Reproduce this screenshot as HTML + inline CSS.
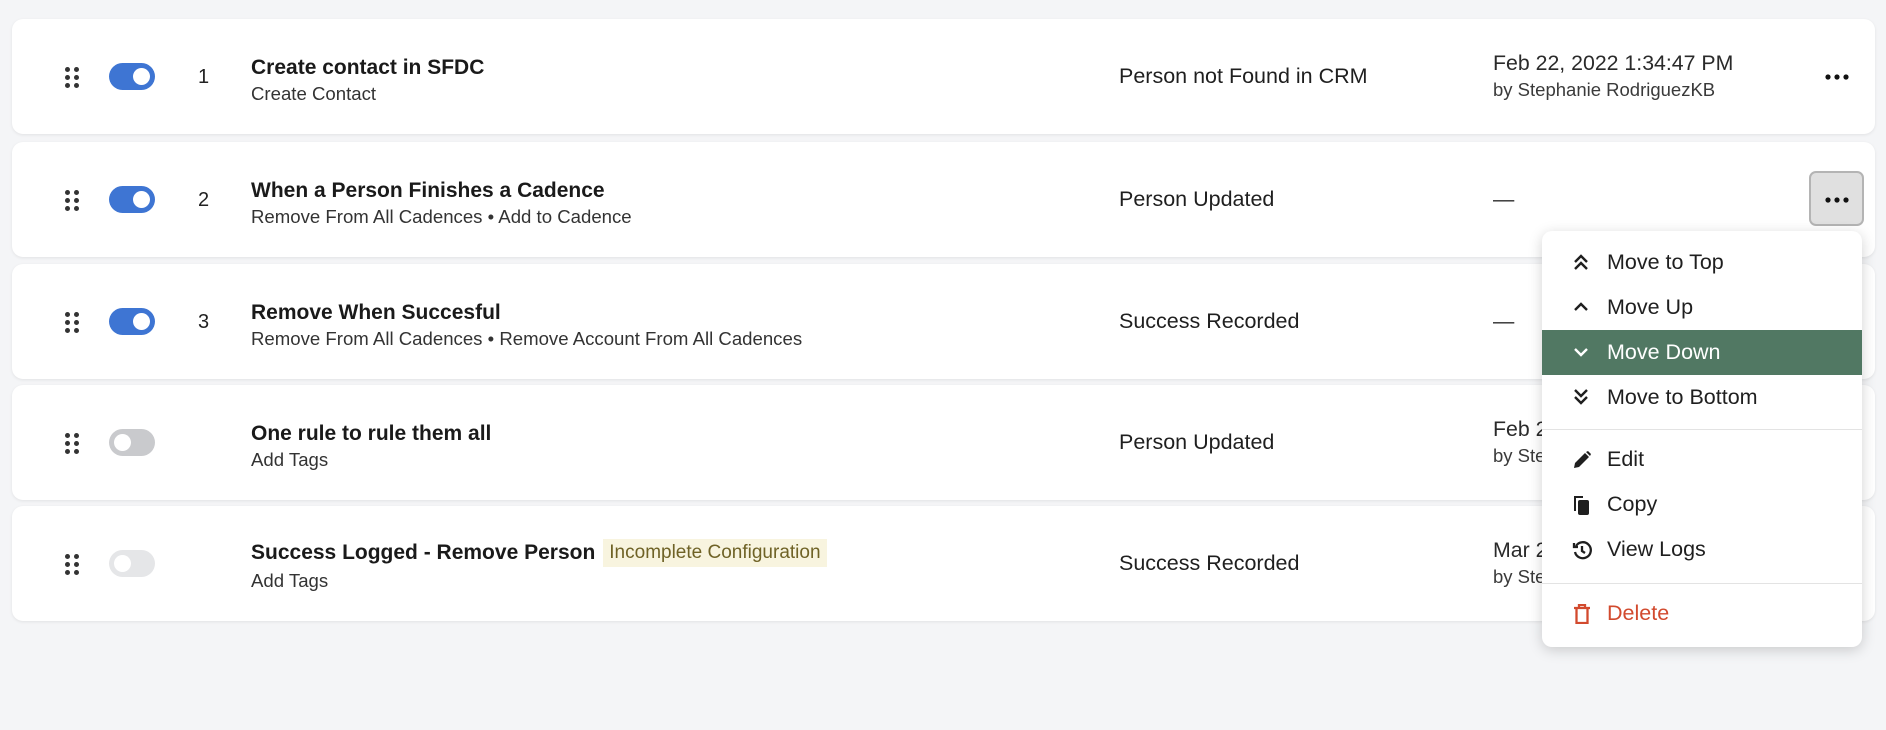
<!DOCTYPE html>
<html><head><meta charset="utf-8"><style>
*{margin:0;padding:0;box-sizing:border-box}
body{width:1886px;height:730px;background:#f4f5f7;font-family:"Liberation Sans",sans-serif;color:#1d1d1f;position:relative;overflow:hidden}
.card{position:absolute;left:12px;width:1863px;height:115px;background:#fff;border-radius:11px;box-shadow:0 1px 3px rgba(0,0,0,.08)}
.dots{position:absolute;left:53px;width:14px;height:20px}
.dots i{position:absolute;width:5px;height:5px;border-radius:50%;background:#333}
.tog{position:absolute;left:97px;width:46px;height:27px;border-radius:14px;background:#3e75d3}
.tog::after{content:"";position:absolute;top:5px;left:24px;width:17px;height:17px;border-radius:50%;background:#fff}
.tog.off{background:#c9cacd}.tog.off::after{left:5px}
.tog.dis{background:#e5e6e8}
.num{position:absolute;left:186px;font-size:20px;color:#222}
.title{position:absolute;left:239px;font-size:21px;font-weight:bold;color:#1a1a1a;white-space:nowrap}
.sub{position:absolute;left:239px;font-size:18.6px;color:#333;white-space:nowrap}
.st{position:absolute;left:1107px;font-size:21.5px;color:#1f1f1f}
.dt{position:absolute;left:1481px;font-size:21.3px;color:#2a2a2a;white-space:nowrap}
.by{position:absolute;left:1481px;font-size:18.5px;color:#3a3a3a;white-space:nowrap}
.ell{position:absolute;left:1813px;width:24px;height:6px}
.badge{display:inline-block;margin-left:8px;background:#f8f4df;color:#6f6226;font-weight:normal;font-size:19px;padding:3px 6px;vertical-align:1px}
.menu{position:absolute;left:1542px;top:231px;width:320px;height:416px;background:#fff;border-radius:10px;box-shadow:0 3px 14px rgba(0,0,0,.18)}
.it{position:absolute;left:0;width:320px;height:45px;font-size:21.5px;color:#1f1f1f}
.it span{position:absolute;left:65px;top:10px}
.it svg{position:absolute;left:30px;top:13px}
.hl{background:#517863;color:#fff}
.div{position:absolute;left:0;width:320px;height:1px;background:#e3e3e3}
</style></head><body>

<div class="card" style="top:19px">
 <div class="dots" style="top:48px"><i style="left:0;top:0"></i><i style="left:9px;top:0"></i><i style="left:0;top:8px"></i><i style="left:9px;top:8px"></i><i style="left:0;top:16px"></i><i style="left:9px;top:16px"></i></div>
 <div class="tog" style="top:44px"></div>
 <div class="num" style="top:47px">1</div>
 <div class="title" style="top:37px">Create contact in SFDC</div>
 <div class="sub" style="top:64px">Create Contact</div>
 <div class="st" style="top:45px">Person not Found in CRM</div>
 <div class="dt" style="top:32px">Feb 22, 2022 1:34:47 PM</div>
 <div class="by" style="top:60px">by Stephanie RodriguezKB</div>
 <svg class="ell" style="top:55px" viewBox="0 0 24 6"><circle cx="3" cy="3" r="2.6" fill="#111"/><circle cx="12" cy="3" r="2.6" fill="#111"/><circle cx="21" cy="3" r="2.6" fill="#111"/></svg>
</div>

<div class="card" style="top:142px">
 <div class="dots" style="top:48px"><i style="left:0;top:0"></i><i style="left:9px;top:0"></i><i style="left:0;top:8px"></i><i style="left:9px;top:8px"></i><i style="left:0;top:16px"></i><i style="left:9px;top:16px"></i></div>
 <div class="tog" style="top:44px"></div>
 <div class="num" style="top:47px">2</div>
 <div class="title" style="top:37px">When a Person Finishes a Cadence</div>
 <div class="sub" style="top:64px">Remove From All Cadences • Add to Cadence</div>
 <div class="st" style="top:45px">Person Updated</div>
 <div class="dt" style="top:45px">—</div>
 <div style="position:absolute;left:1797px;top:29px;width:55px;height:55px;background:#e0e0e0;border:2px solid #b4b4b4;border-radius:7px"></div>
 <svg class="ell" style="top:55px" viewBox="0 0 24 6"><circle cx="3" cy="3" r="2.6" fill="#111"/><circle cx="12" cy="3" r="2.6" fill="#111"/><circle cx="21" cy="3" r="2.6" fill="#111"/></svg>
</div>

<div class="card" style="top:264px">
 <div class="dots" style="top:48px"><i style="left:0;top:0"></i><i style="left:9px;top:0"></i><i style="left:0;top:8px"></i><i style="left:9px;top:8px"></i><i style="left:0;top:16px"></i><i style="left:9px;top:16px"></i></div>
 <div class="tog" style="top:44px"></div>
 <div class="num" style="top:47px">3</div>
 <div class="title" style="top:37px">Remove When Succesful</div>
 <div class="sub" style="top:64px">Remove From All Cadences • Remove Account From All Cadences</div>
 <div class="st" style="top:45px">Success Recorded</div>
 <div class="dt" style="top:45px">—</div>
</div>

<div class="card" style="top:385px">
 <div class="dots" style="top:48px"><i style="left:0;top:0"></i><i style="left:9px;top:0"></i><i style="left:0;top:8px"></i><i style="left:9px;top:8px"></i><i style="left:0;top:16px"></i><i style="left:9px;top:16px"></i></div>
 <div class="tog off" style="top:44px"></div>
 <div class="title" style="top:37px">One rule to rule them all</div>
 <div class="sub" style="top:64px">Add Tags</div>
 <div class="st" style="top:45px">Person Updated</div>
 <div class="dt" style="top:32px">Feb 22, 2022 1:34:47 PM</div>
 <div class="by" style="top:60px">by Stephanie RodriguezKB</div>
</div>

<div class="card" style="top:506px">
 <div class="dots" style="top:48px"><i style="left:0;top:0"></i><i style="left:9px;top:0"></i><i style="left:0;top:8px"></i><i style="left:9px;top:8px"></i><i style="left:0;top:16px"></i><i style="left:9px;top:16px"></i></div>
 <div class="tog off dis" style="top:44px"></div>
 <div class="title" style="top:33px">Success Logged - Remove Person<span class="badge">Incomplete Configuration</span></div>
 <div class="sub" style="top:64px">Add Tags</div>
 <div class="st" style="top:45px">Success Recorded</div>
 <div class="dt" style="top:32px">Mar 22, 2022 1:34:47 PM</div>
 <div class="by" style="top:60px">by Stephanie RodriguezKB</div>
</div>

<div class="menu">
 <div class="it" style="top:9px"><svg width="18" height="18" viewBox="0 0 18 18" fill="none" stroke="#1f1f1f" stroke-width="2.4"><path d="M3 9l6-6 6 6M3 16l6-6 6 6"/></svg><span>Move to Top</span></div>
 <div class="it" style="top:54px"><svg width="18" height="18" viewBox="0 0 18 18" fill="none" stroke="#1f1f1f" stroke-width="2.4"><path d="M3 12l6-6 6 6"/></svg><span>Move Up</span></div>
 <div class="it hl" style="top:99px"><svg width="18" height="18" viewBox="0 0 18 18" fill="none" stroke="#fff" stroke-width="2.4"><path d="M3 6l6 6 6-6"/></svg><span>Move Down</span></div>
 <div class="it" style="top:144px"><svg width="18" height="18" viewBox="0 0 18 18" fill="none" stroke="#1f1f1f" stroke-width="2.4"><path d="M3 2l6 6 6-6M3 9l6 6 6-6"/></svg><span>Move to Bottom</span></div>
 <div class="div" style="top:198px"></div>
 <div class="it" style="top:206px"><svg width="20" height="20" viewBox="0 0 20 20"><path d="M2 18l1-5 10-10 4 4-10 10z M14 2l2-1 3 3-1 2z" fill="#1f1f1f"/></svg><span>Edit</span></div>
 <div class="it" style="top:251px"><svg width="20" height="20" viewBox="0 0 20 20"><path d="M2 1h9v2H4v13H2z" fill="#1f1f1f"/><rect x="6" y="5" width="11" height="15" rx="2" fill="#1f1f1f"/></svg><span>Copy</span></div>
 <div class="it" style="top:296px"><svg width="20" height="20" viewBox="0 0 20 20" fill="none" stroke="#1f1f1f" stroke-width="2.3"><path d="M4 6a8 8 0 1 1-1 6"/><path d="M2 3v4h4" /><path d="M10 6v5l3 2"/></svg><span>View Logs</span></div>
 <div class="div" style="top:352px"></div>
 <div class="it" style="top:360px;color:#d24a2e"><svg width="20" height="20" viewBox="0 0 20 20" fill="none" stroke="#d24a2e" stroke-width="2.3"><path d="M2 4h16M7 3V1h6v2"/><path d="M4.5 5v14h11V5"/></svg><span>Delete</span></div>
</div>
</body></html>
